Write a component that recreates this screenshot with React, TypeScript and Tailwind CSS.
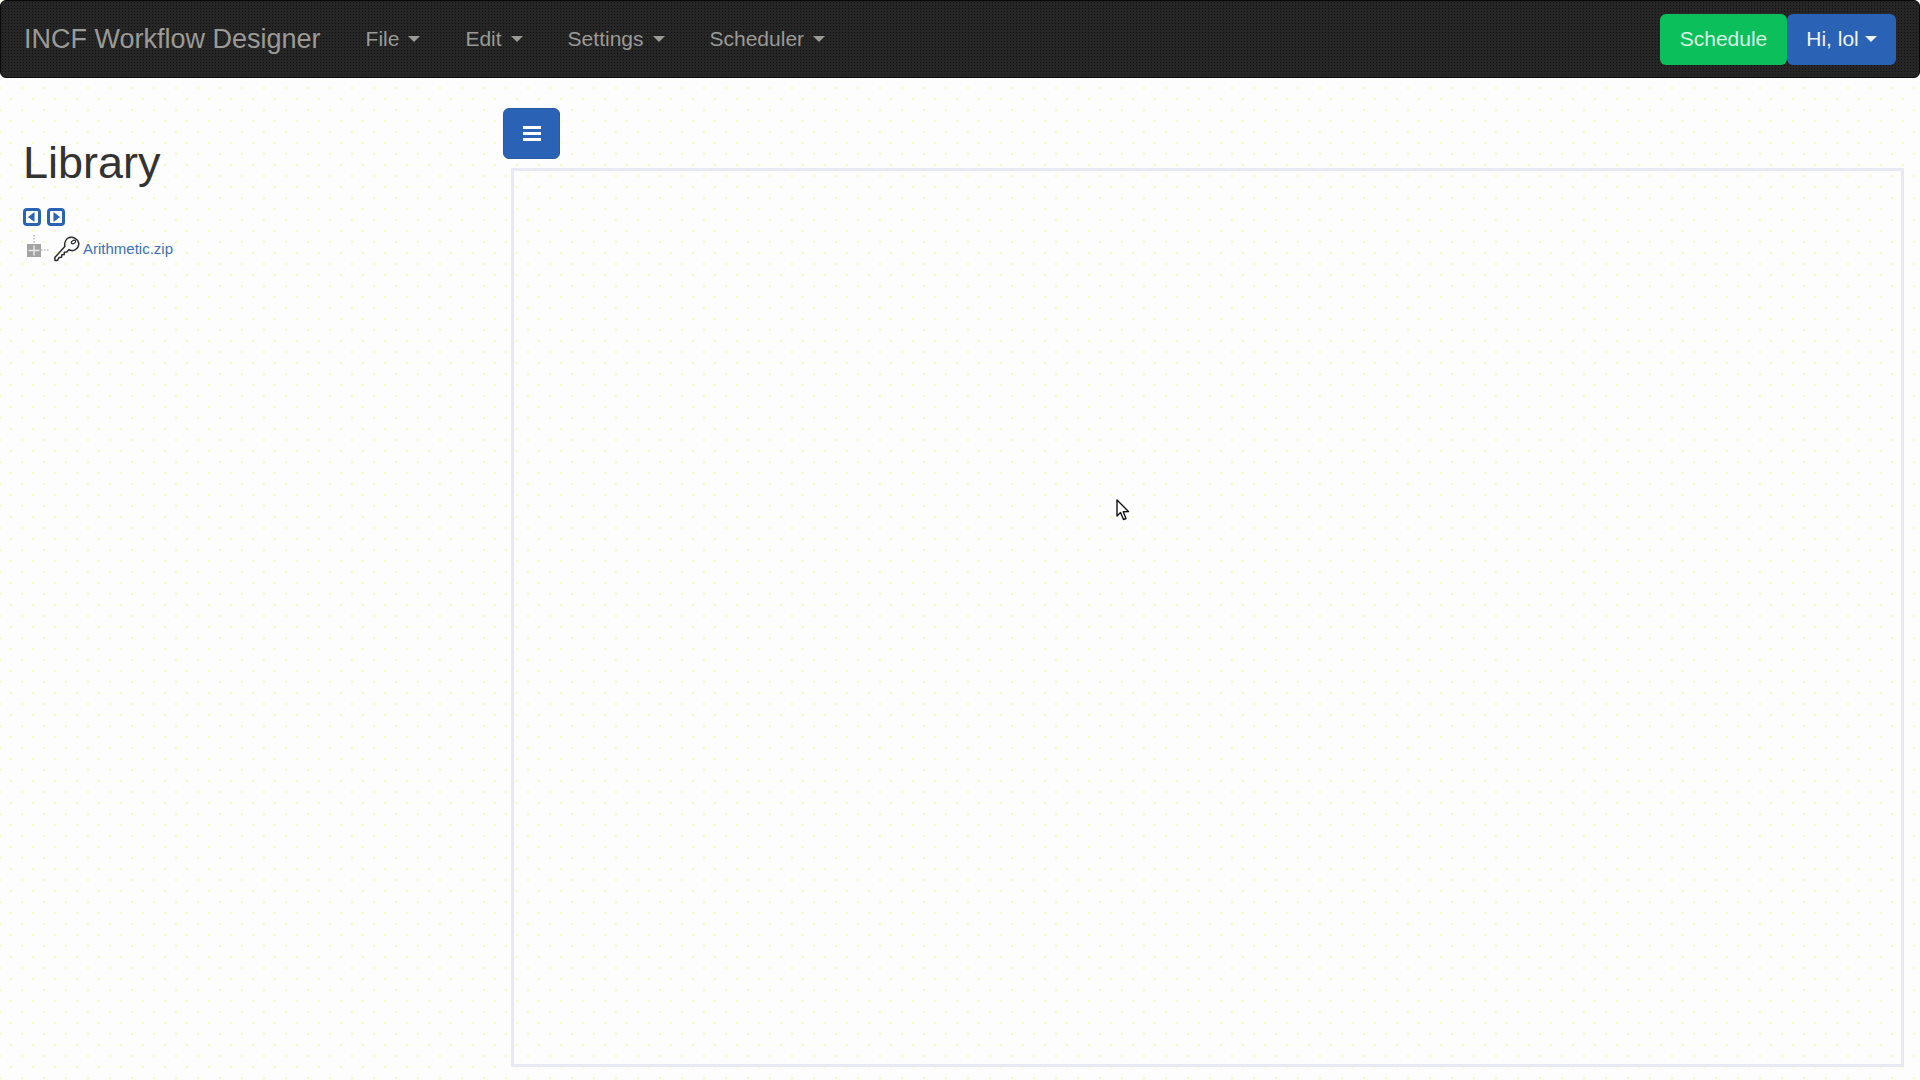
import React from "react";

const navItems = ["File", "Edit", "Settings", "Scheduler"];

function Caret({ small }: { small?: boolean }) {
  return (
    <span
      className={`${small ? "ml-[6px]" : "ml-[9px]"} inline-block align-middle w-0 h-0 border-x-[6px] border-x-transparent border-t-[6px] border-t-current`}
    />
  );
}

function PageBox({ right }: { right?: boolean }) {
  return (
    <svg width="18" height="18" viewBox="0 0 18 18" className="block">
      <rect x="1.5" y="1.5" width="15" height="15" rx="2.5" fill="#fff" stroke="#2a62b5" strokeWidth="3" />
      {right ? (
        <path d="M6.5 4 L13 9 L6.5 14 Z" fill="#2a62b5" />
      ) : (
        <path d="M11.5 4 L5 9 L11.5 14 Z" fill="#2a62b5" />
      )}
    </svg>
  );
}

function TreeToggle() {
  return (
    <svg width="28" height="28" viewBox="0 0 28 28" className="block">
      <path d="M9 0 V10" stroke="#999" strokeWidth="1" strokeDasharray="1.5 1.5" />
      <path d="M16 15 H24" stroke="#999" strokeWidth="1" strokeDasharray="1.5 1.5" />
      <rect x="2" y="9" width="14" height="13" fill="#a3a3a3" />
      <path d="M9 10.5 V20.5 M3.5 15.5 H14.5" stroke="#e8e8e8" strokeWidth="1.5" />
    </svg>
  );
}

function KeyIcon() {
  return (
    <svg width="26" height="26" viewBox="0 0 26 26" fill="none" className="block">
      <path
        d="M15.5 1.5 C19 0.5 24 3 24.7 7 C25.3 11 21.5 15 17.5 14.6 C16.5 14.5 15.5 14 15 13.6 L12.8 16 L10.3 16.2 L10.2 18.6 L7.8 18.8 L7.6 21.2 L5 21.6 L3.5 24.4 L1 24.5 L0.8 21.6 L10.8 10.5 C10.3 6.5 12 2.5 15.5 1.5 Z"
        stroke="#2b2b2b"
        strokeWidth="1.5"
        strokeLinejoin="round"
      />
      <ellipse cx="19.5" cy="6" rx="2.3" ry="1.5" transform="rotate(-30 19.5 6)" stroke="#2b2b2b" strokeWidth="1.2" />
    </svg>
  );
}

function Cursor() {
  return (
    <svg width="14" height="23" viewBox="0 0 14 23" className="absolute left-[1116px] top-[499px]">
      <path
        d="M1 1 V17 L4.5 13.5 L7.5 20.5 L10 19.5 L7.2 12.8 L12.5 12.5 Z"
        fill="#fff"
        stroke="#111"
        strokeWidth="1.4"
        strokeLinejoin="round"
      />
    </svg>
  );
}

export default function App() {
  return (
    <div className="relative h-[1080px] overflow-hidden bg-[#fdfdfd] bg-[radial-gradient(#fdfab8_1px,transparent_1.2px),radial-gradient(#fdfab8_1px,transparent_1.2px)] bg-[length:22px_22px] bg-[position:0_0,11px_11px] font-['Liberation_Sans',Arial,sans-serif] text-[#333]">
      <nav className="flex items-center h-[78px] pl-[23px] pr-[23px] bg-[#262626] bg-[radial-gradient(#111_1px,transparent_1px)] bg-[length:3px_3px] border border-[#0a0a0a] rounded-[6px]">
        <span className="text-[27px] text-[#9a9a96] mr-[45px]">INCF Workflow Designer</span>
        <ul className="flex gap-[45px] text-[21px] text-[#9a9a96]">
          {navItems.map((item) => (
            <li key={item} className="flex items-center">
              {item}
              <Caret />
            </li>
          ))}
        </ul>
        <div className="ml-auto flex text-[21px] text-white">
          <button className="h-[51px] w-[127px] bg-[#0bbf5b] rounded-[6px] text-[#d8f5e2] pb-[1px]">Schedule</button>
          <button className="h-[51px] w-[109px] bg-[#2a62b5] rounded-[6px] text-[#eef3fa] flex items-center justify-center pb-[1px]">
            Hi, lol
            <Caret small />
          </button>
        </div>
      </nav>

      <div className="flex">
        <aside className="w-[503px] shrink-0 pl-[23px] pt-[59px]">
          <h1 className="text-[45px] leading-[52px] text-[#333]">Library</h1>
          <div className="flex gap-[6px] mt-[19px]">
            <PageBox />
            <PageBox right />
          </div>
          <div className="flex items-center mt-[9px] ml-[2px] h-[28px]">
            <TreeToggle />
            <span className="ml-[1px]">
              <KeyIcon />
            </span>
            <a className="ml-[3px] text-[15px] text-[#3d70b5]">Arithmetic.zip</a>
          </div>
        </aside>

        <main className="flex-1 pr-[16px] pt-[30px]">
          <button className="flex items-center justify-center w-[57px] h-[51px] bg-[#2a62b5] border border-[#2a5a9f] rounded-[6px]">
            <span className="flex flex-col gap-[3px]">
              <span className="block w-[18px] h-[3px] bg-white" />
              <span className="block w-[18px] h-[3px] bg-white" />
              <span className="block w-[18px] h-[3px] bg-white" />
            </span>
          </button>
          <div className="ml-[8px] mt-[9px] h-[899px] border-[3px] border-solid border-[#e8e9f5]" />
        </main>
      </div>

      <Cursor />
    </div>
  );
}
